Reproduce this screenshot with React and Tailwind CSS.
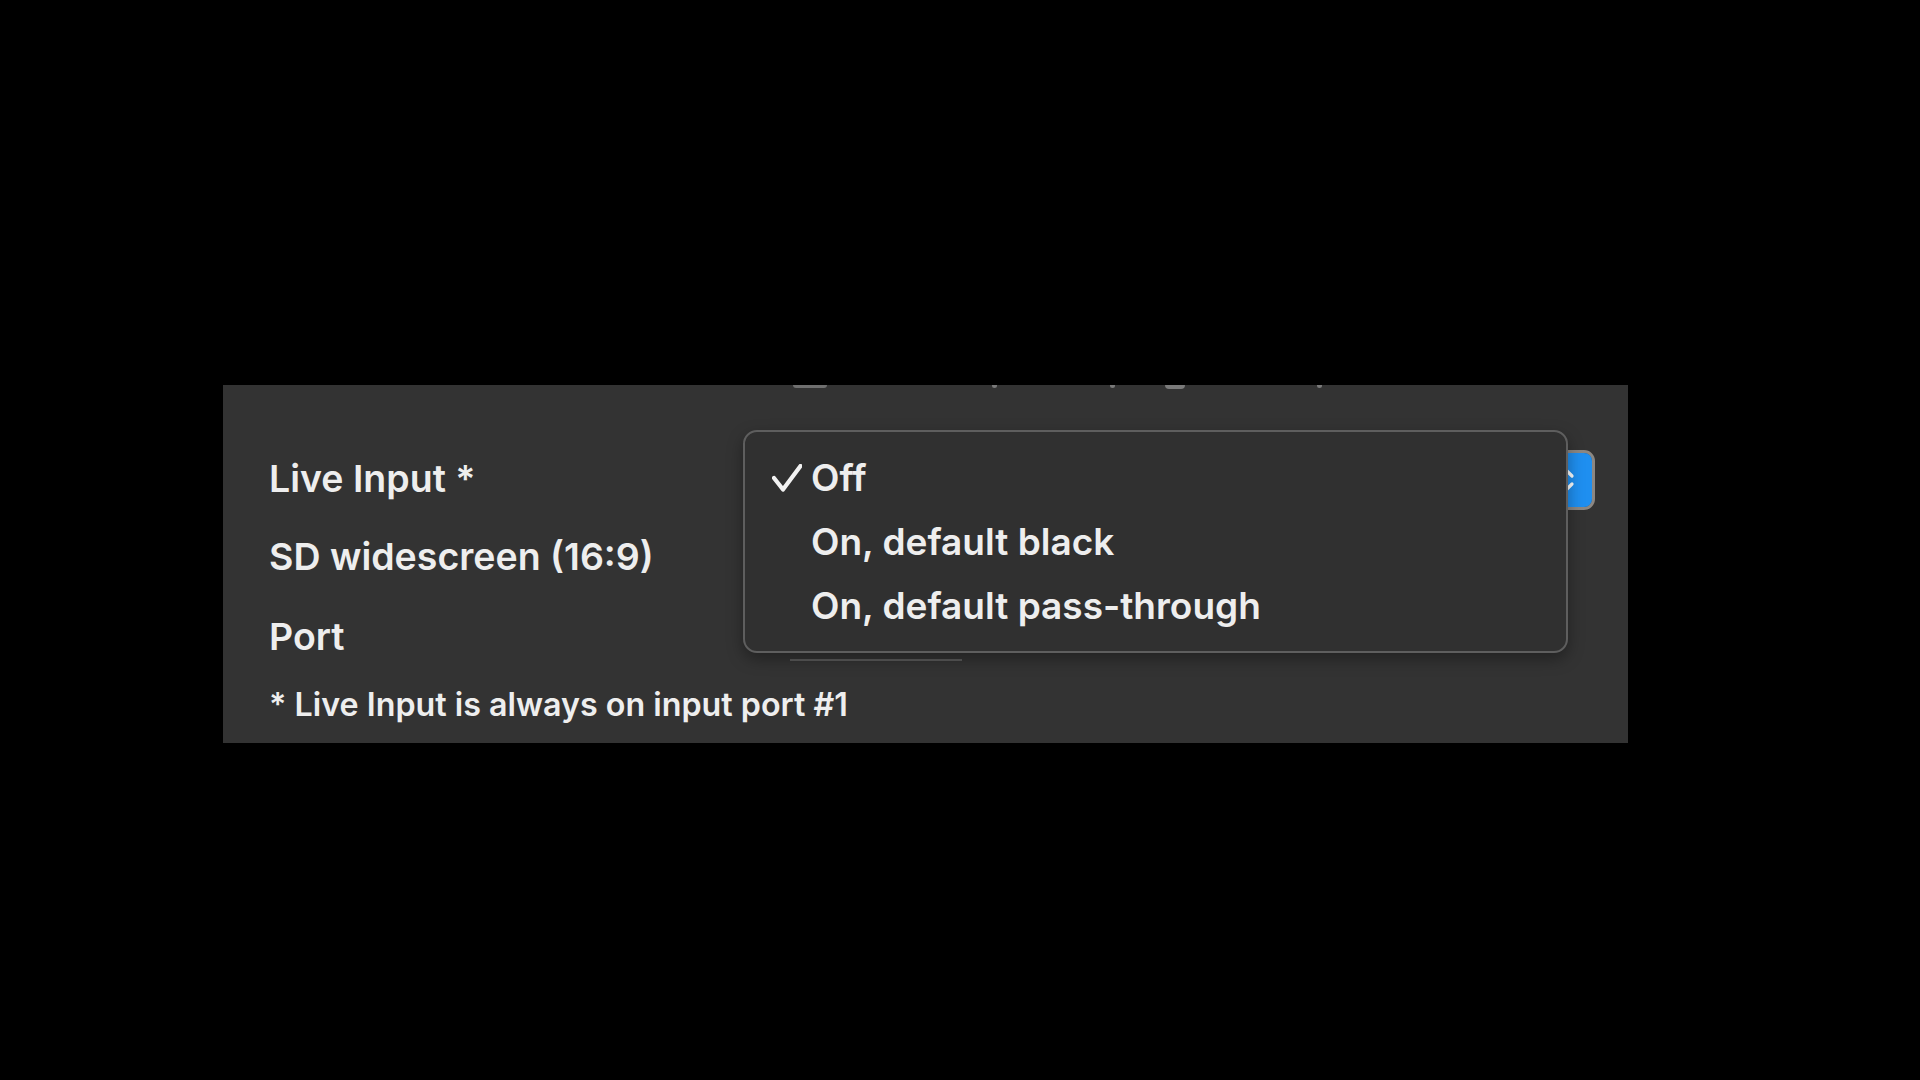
import React from "react";

function Check() {
  return (
    <svg width="30" height="28" viewBox="0 0 30 28" className="shrink-0">
      <path d="M2 14 L11 25.5 L28.5 2" fill="none" stroke="#f2f2f2" strokeWidth="4.2" strokeLinecap="round" strokeLinejoin="round" />
    </svg>
  );
}

function Chevrons() {
  return (
    <svg width="20" height="30" viewBox="0 0 20 30">
      <path d="M3 11 L10 4 L17 11" fill="none" stroke="#ffffff" strokeWidth="3.2" strokeLinecap="round" strokeLinejoin="round" />
      <path d="M3 19 L10 26 L17 19" fill="none" stroke="#ffffff" strokeWidth="3.2" strokeLinecap="round" strokeLinejoin="round" />
    </svg>
  );
}

export default function App() {
  const font = { fontFamily: "Inter, 'Liberation Sans', sans-serif" };
  return (
    <div className="w-[1920px] h-[1080px] bg-black overflow-hidden" style={font}>
      <div className="pt-[385px] pl-[223px]">
        <div className="relative w-[1405px] h-[358px] bg-[#333333] flex flex-col pl-[46px] pr-[33px] text-[#eeeeee] font-semibold">
          {/* cut-off remnants of a row above */}
          <div className="flex h-[4px] -ml-[46px]">
            <div className="ml-[570px] w-[34px] h-[3px] rounded-b-full bg-[#6f6f6f]" />
            <div className="ml-[165px] w-[5px] h-[3px] rounded-b-full bg-[#7a7a7a]" />
            <div className="ml-[113px] w-[5px] h-[3px] rounded-b-full bg-[#7a7a7a]" />
            <div className="ml-[50px] w-[20px] h-[4px] rounded-b-full bg-[#7a7a7a]" />
            <div className="ml-[132px] w-[5px] h-[3px] rounded-b-full bg-[#7a7a7a]" />
          </div>

          {/* Row 1 */}
          <div className="flex items-start mt-[61px] h-[60px]">
            <div className="mt-[10px] text-[37.5px] leading-[37px] whitespace-nowrap">Live Input *</div>
            <div className="ml-auto w-[805px] h-[60px] rounded-[11px] border-[3px] border-[#8c8782] bg-[#555555] flex justify-end overflow-hidden">
              <div className="w-[54px] h-full bg-[#1f8ff0] flex items-center justify-center">
                <Chevrons />
              </div>
            </div>
          </div>

          {/* Row 2 */}
          <div className="flex mt-[28px]">
            <div className="text-[37.5px] leading-[37px] whitespace-nowrap">SD widescreen (16:9)</div>
          </div>

          {/* Row 3 */}
          <div className="flex items-start mt-[43px]">
            <div className="w-[521px] text-[37.5px] leading-[37px]">Port</div>
            <div className="w-[172px] h-[43px] border-b-2 border-[#5a5a5a]" />
          </div>

          {/* Footnote */}
          <div className="mt-[28px] text-[32.25px] leading-[31.5px] whitespace-nowrap">* Live Input is always on input port #1</div>

          {/* Popup menu */}
          <div className="absolute left-[520px] top-[45px] w-[825px] h-[223px] rounded-[14px] border-2 border-[#5e5e5e] bg-[#303030] pt-[14px] shadow-[0_6px_16px_rgba(0,0,0,0.35)]">
            <div className="flex items-center h-[64px] pl-[27px] text-[37px] leading-[64px]">
              <Check />
              <span className="ml-[9px]">Off</span>
            </div>
            <div className="flex items-center h-[64px] pl-[66px] text-[37px] leading-[64px] whitespace-nowrap">On, default black</div>
            <div className="flex items-center h-[64px] pl-[66px] text-[37px] leading-[64px] whitespace-nowrap">On, default pass-through</div>
          </div>
        </div>
      </div>
    </div>
  );
}
